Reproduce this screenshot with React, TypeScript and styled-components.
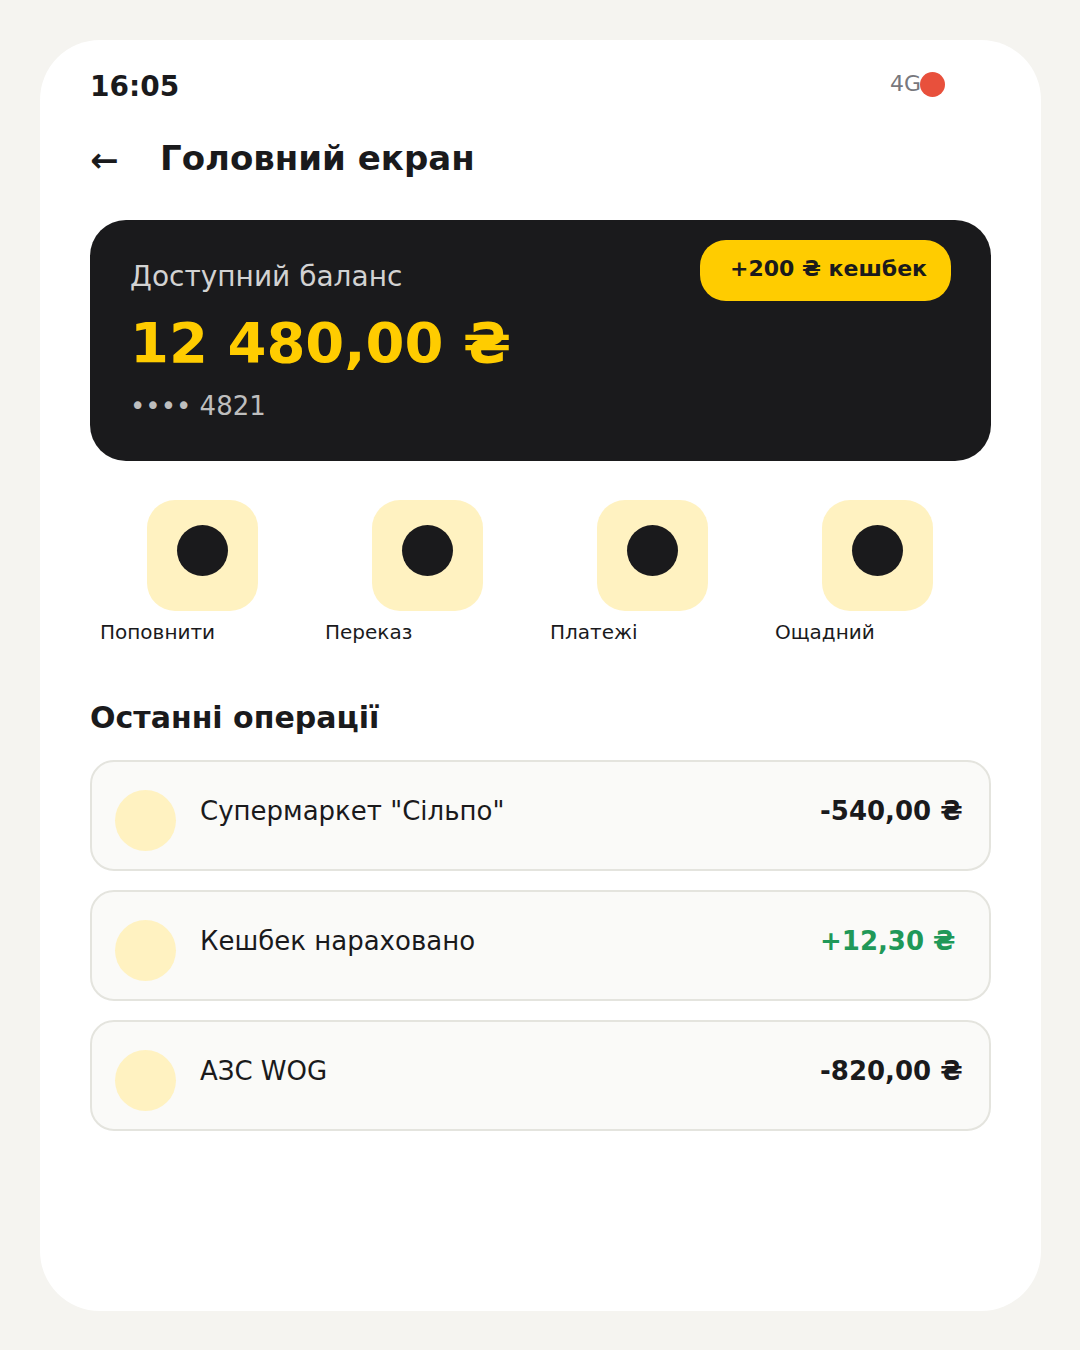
import styled, { createGlobalStyle } from 'styled-components';

const colors = {
  page: '#f5f4f0',
  surface: '#ffffff',
  ink: '#1a1a1c',
  accent: '#ffcc00',
  accentSoft: '#fff2c1',
  row: '#fafaf8',
  rowBorder: '#e4e4de',
  income: '#209858',
  alert: '#e8503c',
  network: '#78787d',
  label: '#d2d2d2',
  mask: '#bebebe',
};

const GlobalStyle = createGlobalStyle`
  * {
    box-sizing: border-box;
  }

  body {
    margin: 0;
    background: ${colors.page};
    color: ${colors.ink};
    font-family: 'DejaVu Sans', sans-serif;
  }

  h1, h2, p, ul {
    margin: 0;
    padding: 0;
  }

  button {
    padding: 0;
    border: 0;
    background: none;
    color: inherit;
    font-family: inherit;
    text-align: left;
    cursor: pointer;
  }
`;

const Page = styled.div`
  padding: 40px 39px 39px 40px;
`;

const Screen = styled.main`
  min-height: calc(100vh - 79px);
  padding: 30px 50px;
  border-radius: 60px;
  background: ${colors.surface};
`;

const StatusBar = styled.div`
  display: flex;
  align-items: flex-start;
  justify-content: space-between;
  padding-right: 46px;
`;

const Time = styled.span`
  font-size: 28px;
  font-weight: bold;
  line-height: 34px;
`;

const Signal = styled.div`
  display: flex;
  align-items: center;
`;

const Network = styled.span`
  width: 30px;
  color: ${colors.network};
  font-size: 22px;
  line-height: 28px;
  white-space: nowrap;
`;

const Dot = styled.span<{ $size: number; $color: string }>`
  flex: none;
  display: block;
  width: ${({ $size }) => $size}px;
  height: ${({ $size }) => $size}px;
  border-radius: 50%;
  background: ${({ $color }) => $color};
`;

const Header = styled.header`
  display: flex;
  align-items: flex-start;
  margin: 34px 0 38px;
`;

const BackButton = styled.button`
  width: 70px;
  font-size: 34px;
  font-weight: bold;
  line-height: 44px;
`;

const Title = styled.h1`
  font-size: 34px;
  line-height: 40px;
`;

const BalanceCard = styled.section`
  display: flex;
  align-items: flex-start;
  justify-content: space-between;
  padding: 20px 40px 40px;
  border-radius: 36px;
  background: ${colors.ink};
`;

const Balance = styled.div`
  display: flex;
  flex-direction: column;
  gap: 16px;
  padding-top: 20px;
`;

const BalanceLabel = styled.p`
  color: ${colors.label};
  font-size: 28px;
  line-height: 34px;
`;

const BalanceAmount = styled.p`
  color: ${colors.accent};
  font-size: 56px;
  font-weight: bold;
  line-height: 65px;
`;

const CardNumber = styled.p`
  color: ${colors.mask};
  font-size: 26px;
  line-height: 30px;
`;

const Cashback = styled.span`
  width: 251px;
  padding: 16px 0 19px 30px;
  border-radius: 26px;
  background: ${colors.accent};
  font-size: 22px;
  font-weight: bold;
  line-height: 26px;
  white-space: nowrap;
`;

const Actions = styled.nav`
  display: grid;
  grid-template-columns: repeat(4, 1fr);
  margin-top: 39px;
  padding-right: 1px;
`;

const Action = styled.button`
  display: flex;
  flex-direction: column;
  gap: 9px;
`;

const ActionTile = styled.span`
  display: flex;
  justify-content: center;
  align-self: center;
  width: 111px;
  height: 111px;
  padding-top: 25px;
  border-radius: 28px;
  background: ${colors.accentSoft};
`;

const ActionLabel = styled.span`
  padding-left: 10px;
  font-size: 20px;
  line-height: 24px;
`;

const SectionTitle = styled.h2`
  margin: 56px 0 25px;
  font-size: 30px;
  line-height: 35px;
`;

const Operations = styled.ul`
  display: flex;
  flex-direction: column;
  gap: 19px;
  list-style: none;
`;

const Operation = styled.li`
  display: grid;
  grid-template-columns: 61px 1fr 145px;
  column-gap: 24px;
  padding: 28px 24px 18px 23px;
  min-height: 111px;
  border: 2px solid ${colors.rowBorder};
  border-radius: 24px;
  background: ${colors.row};
  font-size: 26px;
  line-height: 30px;
`;

const OperationName = styled.span`
  padding-top: 6px;
`;

const OperationAmount = styled.span<{ $income: boolean }>`
  padding-top: 6px;
  color: ${({ $income }) => ($income ? colors.income : colors.ink)};
  font-weight: bold;
  white-space: nowrap;
`;

const actions = ['Поповнити', 'Переказ', 'Платежі', 'Ощадний'];

const operations = [
  { name: 'Супермаркет "Сільпо"', amount: '-540,00 ₴' },
  { name: 'Кешбек нараховано', amount: '+12,30 ₴' },
  { name: 'АЗС WOG', amount: '-820,00 ₴' },
];

export default function App() {
  return (
    <Page>
      <GlobalStyle />
      <Screen>
        <StatusBar>
          <Time>16:05</Time>
          <Signal>
            <Network>4G</Network>
            <Dot $size={25} $color={colors.alert} />
          </Signal>
        </StatusBar>

        <Header>
          <BackButton type="button">←</BackButton>
          <Title>Головний екран</Title>
        </Header>

        <BalanceCard>
          <Balance>
            <BalanceLabel>Доступний баланс</BalanceLabel>
            <BalanceAmount>12 480,00 ₴</BalanceAmount>
            <CardNumber>•••• 4821</CardNumber>
          </Balance>
          <Cashback>+200 ₴ кешбек</Cashback>
        </BalanceCard>

        <Actions>
          {actions.map((label) => (
            <Action key={label} type="button">
              <ActionTile>
                <Dot $size={51} $color={colors.ink} />
              </ActionTile>
              <ActionLabel>{label}</ActionLabel>
            </Action>
          ))}
        </Actions>

        <SectionTitle>Останні операції</SectionTitle>
        <Operations>
          {operations.map(({ name, amount }) => (
            <Operation key={name}>
              <Dot $size={61} $color={colors.accentSoft} />
              <OperationName>{name}</OperationName>
              <OperationAmount $income={amount.startsWith('+')}>{amount}</OperationAmount>
            </Operation>
          ))}
        </Operations>
      </Screen>
    </Page>
  );
}
